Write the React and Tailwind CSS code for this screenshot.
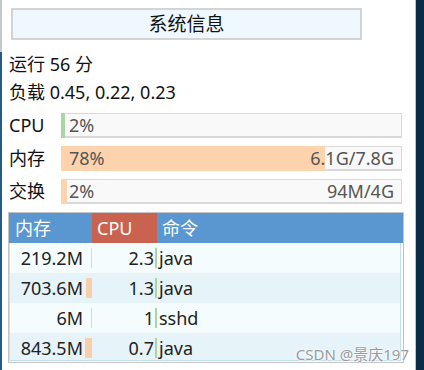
const FONT = { fontFamily: '"Noto Sans", "Noto Sans CJK SC", sans-serif' }

const bars = [
  { label: 'CPU', pct: 2, fillW: '4px', fill: 'bg-[#a9d6a3]', right: '' },
  { label: '内存', pct: 78, fillW: '78%', fill: 'bg-[#fdd3ae]', right: '6.1G/7.8G' },
  { label: '交换', pct: 2, fillW: '6px', fill: 'bg-[#fdd3ae]', right: '94M/4G' },
]

const procs = [
  { mem: '219.2M', memW: 1, cpu: '2.3', cmd: 'java' },
  { mem: '703.6M', memW: 6, cpu: '1.3', cmd: 'java' },
  { mem: '6M', memW: 1, cpu: '1', cmd: 'sshd' },
  { mem: '843.5M', memW: 7, cpu: '0.7', cmd: 'java' },
]

function Bar({ label, pct, fillW, fill, right }) {
  return (
    <div className="flex items-center h-[33px]">
      <div className="w-[52px] text-[#111]">{label}</div>
      <div className="relative w-[341px] h-[25px] border border-[#d9d9d9] border-b-2 bg-[#f9f9f9] flex items-center justify-between px-[7px] text-[#555]">
        <div className={`absolute -left-px -top-px -bottom-[2px] ${fill}`} style={{ width: fillW }} />
        <span className="relative leading-none">{pct}%</span>
        <span className="relative leading-none">{right}</span>
      </div>
    </div>
  )
}

export default function App() {
  return (
    <div className="flex w-[424px] h-[370px] overflow-hidden bg-white text-[18px]" style={FONT}>
      <div className="w-[2px] flex flex-col">
        <div className="h-[52px] bg-[#c4c8cc]" />
        <div className="flex-1 bg-[#245c82]" />
      </div>

      <div className="relative w-[413px] pl-[7px] pt-[8px]">
        <div className="ml-[2px] w-[351px] h-[32px] border-2 border-[#d4d4d4] bg-[#f0f8ff] flex items-center justify-center text-[19px] text-[#111]">
          系统信息
        </div>

        <div className="mt-[10px] leading-[28px] text-[#111]">
          <div>运行 56 分</div>
          <div>负载 0.45, 0.22, 0.23</div>
        </div>

        <div className="mt-[3px]">
          {bars.map((b) => (
            <Bar key={b.label} {...b} />
          ))}
        </div>

        <div className="mt-[4px] -ml-px w-[396px] h-[151px] border border-[#c4c4c4]">
          <div className="flex h-[30px] bg-[#5a96d0] text-white items-center">
            <div className="w-[83px] pl-[6px]">内存</div>
            <div className="w-[65px] h-full bg-[#c9634f] flex items-center pl-[5px]">CPU</div>
            <div className="pl-[5px]">命令</div>
          </div>
          <div className="w-[392px] h-[118px] overflow-hidden border border-t-0 border-[#c2def1] text-[#222]">
            {procs.map((p, i) => (
              <div key={i} className={`flex h-[30px] ${i % 2 ? 'bg-[#e6f4f9]' : 'bg-[#f4fcfe]'}`}>
                <div className="w-[82px] flex items-center justify-end py-[5px]">
                  <span className="pr-[2px]">{p.mem}</span>
                  <div className="h-full w-[7px] flex justify-end">
                    <div className="h-full bg-[#f9cfaa]" style={{ width: p.memW }} />
                  </div>
                </div>
                <div className="w-[65px] flex items-center justify-end py-[5px]">
                  <span className="pr-[1px]">{p.cpu}</span>
                  <div className="h-full w-[2px] bg-[#a9d6a3]" />
                </div>
                <div className="flex items-center pl-[2px]">{p.cmd}</div>
              </div>
            ))}
          </div>
        </div>

        <div
          className="absolute right-[6px] bottom-[8px] text-[15px] leading-none text-[#9a9a9a]"
          style={{ textShadow: '0 0 2px #fff, 0 0 2px #fff' }}
        >
          CSDN @景庆197
        </div>
      </div>

      <div className="w-px bg-[#b8c4cf]" />
      <div className="flex-1 bg-[#0b2c48]" />
    </div>
  )
}
